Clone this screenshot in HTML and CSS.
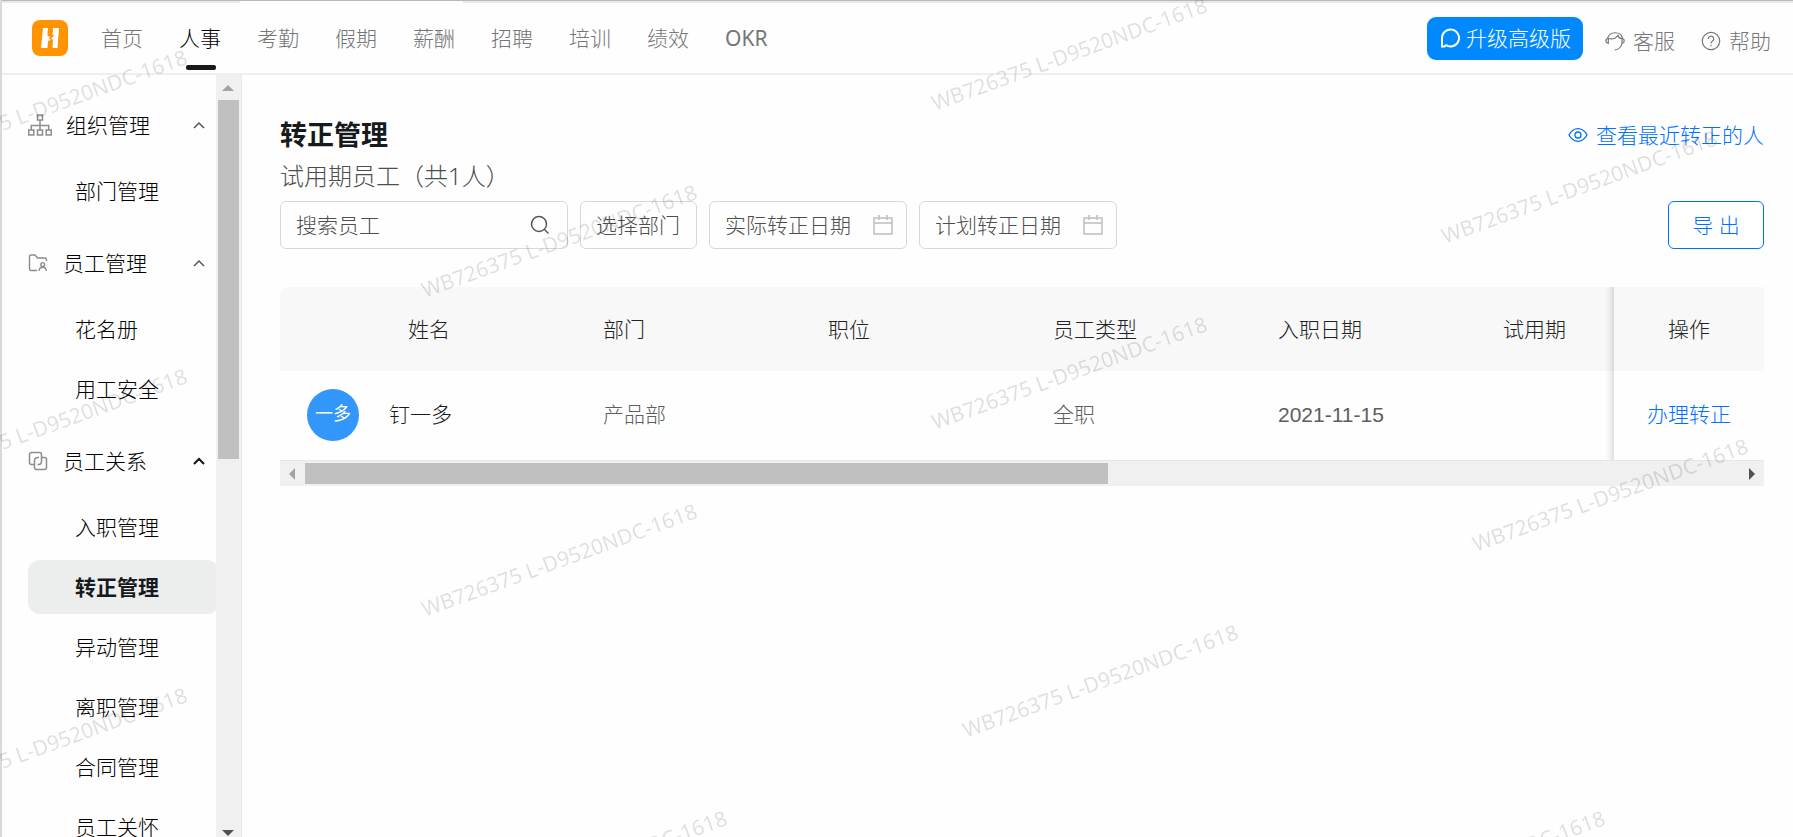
FILE: index.html
```html
<!DOCTYPE html>
<html lang="zh-CN">
<head>
    <meta charset="utf-8">
    <title>转正管理</title>
    <link rel="stylesheet" href="styles.css">
</head>
<body>

    <header class="header">
        <svg class="logo" viewBox="0 0 36 36" aria-label="人事">
            <rect width="36" height="36" rx="8" fill="#ff9400"/>
            <path d="M11 8h5l-.6 7.5 4 2.5 1-.6L21 8h6l-1.500 20h-5l.5-7-1.500-1.500-3.500 1.500-.5 7H9z" fill="#fff"/>
            <path d="M21.500 15l-3.500 3.500 3 2" fill="none" stroke="#ff9400" stroke-width="1.500"/>
        </svg>
        <nav class="nav">
            <a href="#">首页</a>
            <a href="#" class="active">人事</a>
            <a href="#">考勤</a>
            <a href="#">假期</a>
            <a href="#">薪酬</a>
            <a href="#">招聘</a>
            <a href="#">培训</a>
            <a href="#">绩效</a>
            <a href="#" class="latin">OKR</a>
        </nav>
        <div class="header-right">
            <button class="upgrade" type="button">
                <svg width="20" height="20" viewBox="0 0 20 20" fill="none" stroke="#fff" stroke-width="2">
                    <path d="M2 18.500V10a8.500 8.500 0 1 1 4 7.200L4.500 18.500z"/>
                </svg>
                升级高级版
            </button>
            <a href="#" class="help">
                <svg width="20" height="20" viewBox="0 0 20 20" fill="none" stroke="#777" stroke-width="1.200">
                    <path d="M2.500 7.500a7.900 7.900 0 0 1 15.200 0M3.300 7.500C1.500 7.500.8 9 .8 10s1 2 2.500 2.500zM17 7.500c1.500 0 2.200 1.300 2.200 2.400s-.9 2.300-2.200 2.600M3.300 7.500c4 1 8-.5 10-3.500-.3 2 1.200 3.500 3.700 3.500v5c-.7 3.500-3 6-7.500 6.500"/>
                </svg>
                客服
            </a>
            <a href="#" class="help">
                <svg width="20" height="20" viewBox="0 0 20 20" fill="none" stroke="#777" stroke-width="1.200">
                    <circle cx="10" cy="10" r="8.700"/>
                    <path d="M7.300 8a2.700 2.700 0 1 1 4 2.300c-.9.500-1.300 1-1.300 2.200M10 13.800v1.400"/>
                </svg>
                帮助
            </a>
        </div>
    </header>

    <div class="layout">
        <aside class="sidebar">
            <div class="menu">
                <button class="menu-title" type="button">
                    <svg width="24" height="22" viewBox="0 0 24 22" fill="none" stroke="#8a8c8e" stroke-width="1.500">
                        <path d="M9.500 1h5v5h-5zM.8 16h5v5h-5zM9.500 16h5v5h-5zM18.200 16h5v5h-5zM12 6v10M3.300 16v-4.500h17.400V16"/>
                    </svg>
                    <span>组织管理</span>
                    <svg class="arrow" width="12" height="8" viewBox="0 0 12 8"><path d="M1 7l5-5 5 5"/></svg>
                </button>
                <a href="#" class="menu-item">部门管理</a>

                <button class="menu-title" type="button">
                    <svg width="21" height="20" viewBox="0 0 21 20" fill="none" stroke="#8a8c8e" stroke-width="1.400">
                        <path d="M9 17.500H3a1.500 1.500 0 0 1-1.500-1.500V3.500A1.500 1.500 0 0 1 3 2h4l2.500 3H17a1.500 1.500 0 0 1 1.500 1.500V8"/>
                        <circle cx="14.700" cy="11.500" r="1.900"/>
                        <path d="M11 18c.3-2.500 1.700-3.700 3.700-3.700s3.400 1.200 3.700 3.700"/>
                    </svg>
                    <span>员工管理</span>
                    <svg class="arrow" width="12" height="8" viewBox="0 0 12 8"><path d="M1 7l5-5 5 5"/></svg>
                </button>
                <a href="#" class="menu-item">花名册</a>
                <a href="#" class="menu-item">用工安全</a>

                <button class="menu-title open" type="button">
                    <svg width="21" height="20" viewBox="0 0 21 20" fill="none" stroke="#8a8c8e" stroke-width="1.500">
                        <path d="M6.500 13.500h-3a2 2 0 0 1-2-2v-8a2 2 0 0 1 2-2h8a2 2 0 0 1 2 2v7a3 3 0 0 1-3 3H9.500"/>
                        <path d="M11 6.500H9.500a3 3 0 0 0-3 3v7a2 2 0 0 0 2 2h8a2 2 0 0 0 2-2v-8a2 2 0 0 0-2-2h-3"/>
                    </svg>
                    <span>员工关系</span>
                    <svg class="arrow" width="12" height="8" viewBox="0 0 12 8"><path d="M1 7l5-5 5 5"/></svg>
                </button>
                <a href="#" class="menu-item">入职管理</a>
                <a href="#" class="menu-item active">转正管理</a>
                <a href="#" class="menu-item">异动管理</a>
                <a href="#" class="menu-item">离职管理</a>
                <a href="#" class="menu-item">合同管理</a>
                <a href="#" class="menu-item">员工关怀</a>
            </div>
            <div class="scroll-y">
                <div class="scroll-up"></div>
                <div class="scroll-track"><div class="scroll-thumb"></div></div>
                <div class="scroll-down"></div>
            </div>
        </aside>

        <main class="main">
            <div class="title-row">
                <h1>转正管理</h1>
                <a href="#" class="recent">
                    <svg width="20" height="16" viewBox="0 0 20 16" fill="none" stroke="#0070ff" stroke-width="1.300">
                        <path d="M1 8c2.200-4 5.200-6.300 9-6.300S16.800 4 19 8c-2.200 4-5.200 6.300-9 6.300S3.200 12 1 8z"/>
                        <circle cx="10" cy="8" r="3"/>
                    </svg>
                    查看最近转正的人
                </a>
            </div>
            <p class="subtitle">试用期员工（共1人）</p>

            <div class="filters">
                <label class="field search">
                    <input type="text" placeholder="搜索员工" aria-label="搜索员工">
                    <svg width="20" height="20" viewBox="0 0 20 20" fill="none" stroke="#555" stroke-width="1.500">
                        <circle cx="9" cy="9" r="7.500"/><path d="M14.500 14.500l4 4"/>
                    </svg>
                </label>
                <button class="field dept" type="button">选择部门</button>
                <label class="field date">
                    <input type="text" placeholder="实际转正日期" aria-label="实际转正日期">
                    <svg width="20" height="20" viewBox="0 0 20 20" fill="none" stroke="#bfbfbf" stroke-width="1.500">
                        <path d="M1 3h18v16H1zM1 8h18M6 0v5M14 0v5"/>
                    </svg>
                </label>
                <label class="field date">
                    <input type="text" placeholder="计划转正日期" aria-label="计划转正日期">
                    <svg width="20" height="20" viewBox="0 0 20 20" fill="none" stroke="#bfbfbf" stroke-width="1.500">
                        <path d="M1 3h18v16H1zM1 8h18M6 0v5M14 0v5"/>
                    </svg>
                </label>
                <button class="export" type="button">导 出</button>
            </div>

            <div class="table-wrap">
                <table>
                    <colgroup>
                        <col class="col-name">
                        <col class="col"><col class="col"><col class="col"><col class="col">
                        <col>
                        <col class="col-action">
                    </colgroup>
                    <thead>
                        <tr>
                            <th class="name-head">姓名</th>
                            <th>部门</th>
                            <th>职位</th>
                            <th>员工类型</th>
                            <th>入职日期</th>
                            <th>试用期</th>
                            <th class="action">操作</th>
                        </tr>
                    </thead>
                    <tbody>
                        <tr>
                            <td>
                                <div class="person"><span class="avatar">一多</span>钉一多</div>
                            </td>
                            <td>产品部</td>
                            <td></td>
                            <td>全职</td>
                            <td>2021-11-15</td>
                            <td></td>
                            <td class="action"><a href="#">办理转正</a></td>
                        </tr>
                    </tbody>
                </table>
            </div>
            <div class="scroll-x">
                <div class="scroll-left"></div>
                <div class="scroll-track"><div class="scroll-thumb"></div></div>
                <div class="scroll-right"></div>
            </div>
        </main>
    </div>

    <!-- watermark layer -->
    <svg class="watermark" aria-hidden="true">
        <text transform="translate(-85 163) rotate(-20)">WB726375 L-D9520NDC-1618</text>
        <text transform="translate(-85 482) rotate(-20)">WB726375 L-D9520NDC-1618</text>
        <text transform="translate(-85 801) rotate(-20)">WB726375 L-D9520NDC-1618</text>
        <text transform="translate(425 298) rotate(-20)">WB726375 L-D9520NDC-1618</text>
        <text transform="translate(425 617) rotate(-20)">WB726375 L-D9520NDC-1618</text>
        <text transform="translate(455 924) rotate(-20)">WB726375 L-D9520NDC-1618</text>
        <text transform="translate(935 111) rotate(-20)">WB726375 L-D9520NDC-1618</text>
        <text transform="translate(935 430) rotate(-20)">WB726375 L-D9520NDC-1618</text>
        <text transform="translate(966 738) rotate(-20)">WB726375 L-D9520NDC-1618</text>
        <text transform="translate(1445 244) rotate(-20)">WB726375 L-D9520NDC-1618</text>
        <text transform="translate(1476 552) rotate(-20)">WB726375 L-D9520NDC-1618</text>
        <text transform="translate(1333 924) rotate(-20)">WB726375 L-D9520NDC-1618</text>
    </svg>

</body>
</html>
```

FILE: styles.css
```css
* {
    box-sizing: border-box;
}

body, html {
    height: 100%;
    margin: 0;
}

body {
    display: flex;
    flex-direction: column;
    overflow: hidden;
    border-left: 2px solid #d9d9d9;
    background: #fefefe;
    color: #171a1d;
    font-family: "Noto Sans", "Noto Sans CJK SC", sans-serif;
    font-size: 21px;
    font-weight: 300;
    line-height: 30px;
}

a {
    color: inherit;
    text-decoration: none;
}

button, input {
    font: inherit;
    color: inherit;
    cursor: pointer;
}

svg {
    flex: none;
}

/* header */
.header {
    display: flex;
    flex: none;
    height: 75px;
    padding: 0 22px 0 30px;
    border-top: 1px solid #b9b9b9;
    border-bottom: 2px solid #efefef;
    background: linear-gradient(to right, #e8e8e8 238px, #fefefe 238px, #fefefe 461px, #e8e8e8 461px) 0 0 / 100% 2px no-repeat;
}

.logo {
    width: 36px;
    height: 36px;
    margin: 19px 33px 0 0;
}

.nav {
    display: flex;
    gap: 36px;
}

.nav a {
    position: relative;
    padding-top: 22px;
    color: #747677;
}

.nav .active {
    color: #000;
}

.nav .latin {
    font-weight: 400;
}

.nav .active::after {
    content: "";
    position: absolute;
    left: 7px;
    bottom: 3px;
    width: 30px;
    height: 5px;
    border-radius: 2px;
    background: #171a1d;
}

.header-right {
    display: flex;
    align-items: flex-start;
    margin-left: auto;
}

.upgrade {
    display: flex;
    align-items: center;
    gap: 6px;
    height: 43px;
    margin: 16px 22px 0 0;
    padding: 0 12px 2px 13px;
    border: none;
    border-radius: 9px;
    background: #0089ff;
    color: #fff;
}

.help {
    display: flex;
    align-items: center;
    gap: 8px;
    padding-top: 25px;
    color: #747677;
}

.help + .help {
    margin-left: 26px;
}

/* sidebar */
.layout {
    display: flex;
    flex: 1;
    min-height: 0;
}

.sidebar {
    display: flex;
    flex: none;
    width: 240px;
    border-right: 1px solid #e8e8e8;
}

.menu {
    flex: 1;
    overflow: hidden;
    padding: 5px 0 0 26px;
}

.menu-title {
    display: flex;
    align-items: center;
    gap: 14px;
    width: 100%;
    height: 60px;
    margin: 15px 0 9px;
    padding: 0 11px 0 0;
    border: none;
    background: none;
}

.menu-title,
.menu-item {
    color: #000;
}

.arrow {
    margin-left: auto;
    fill: none;
    stroke: #555;
    stroke-width: 1.5;
}

.open .arrow {
    stroke: #111;
    stroke-width: 2;
}

.menu-item {
    display: block;
    height: 54px;
    margin: 0 -3px 6px 0;
    padding-left: 47px;
    border-radius: 12px;
    line-height: 54px;
}

.menu-item.active {
    background: #eceeed;
    color: #171a1d;
    font-weight: bold;
}

/* scrollbars */
.scroll-y {
    display: flex;
    flex-direction: column;
    width: 25px;
    padding: 0 2px;
    background: #f0f0f0;
}

.scroll-track {
    flex: 1;
}

.scroll-thumb {
    background: #c0c0c0;
}

.scroll-y .scroll-thumb {
    height: 50%;
}

.scroll-up {
    height: 25px;
    padding: 10px 4px;
}

.scroll-down {
    height: 19px;
    padding: 12px 4px 0;
}

.scroll-up::before,
.scroll-down::before {
    content: "";
    display: block;
    width: 0;
    border: 6px solid transparent;
    border-top: none;
    border-bottom-color: #a3a3a3;
}

.scroll-down::before {
    border-bottom: none;
    border-top: 6px solid #505050;
}

.scroll-x {
    display: flex;
    height: 26px;
    padding: 2px 0;
    border-top: 1px solid #e6e6e6;
    background: #f0f0f0;
}

.scroll-x .scroll-thumb {
    width: 56%;
    height: 21px;
}

.scroll-left,
.scroll-right {
    width: 25px;
    padding: 5px 9px;
}

.scroll-right {
    padding-left: 10px;
}

.scroll-left::before,
.scroll-right::before {
    content: "";
    display: block;
    width: 0;
    border: 6px solid transparent;
    border-left: none;
    border-right-color: #a3a3a3;
}

.scroll-right::before {
    border-right: none;
    border-left: 6px solid #505050;
}

/* content */
.main {
    flex: 1;
    min-width: 0;
    padding: 41px 29px 0 38px;
}

.title-row {
    display: flex;
    justify-content: space-between;
    align-items: center;
    height: 38px;
}

h1 {
    margin: 0;
    font-size: 27px;
    line-height: 38px;
}

.recent {
    display: flex;
    align-items: center;
    gap: 8px;
    color: #0070ff;
}

.subtitle {
    margin: 4px 0 7px;
    color: #4c4e50;
    font-size: 24px;
    line-height: 36px;
}

.filters {
    display: flex;
    gap: 12px;
    margin-bottom: 38px;
}

.field {
    display: flex;
    align-items: center;
    height: 48px;
    padding: 0 15px;
    border: 1px solid #d8d8d8;
    border-radius: 6px;
    background: none;
    color: #4c4e50;
}

.field input {
    flex: 1;
    min-width: 0;
    padding: 0;
    border: none;
    outline: none;
    background: none;
}

.field input::placeholder {
    color: #4c4e50;
    opacity: 1;
}

.search {
    width: 288px;
}

.search svg {
    margin-right: 2px;
}

.dept {
    width: 117px;
}

.date {
    width: 198px;
    padding-right: 13px;
}

.export {
    width: 96px;
    height: 48px;
    margin-left: auto;
    padding: 0;
    border: 1px solid #0070ff;
    border-radius: 6px;
    background: #fff;
    color: #0070ff;
}

.table-wrap {
    overflow: hidden;
    border-radius: 8px 0 0 0;
}

table {
    width: 2650px;
    table-layout: fixed;
    border-collapse: collapse;
}

.col-name {
    width: 303px;
}

.col {
    width: 225px;
}

.col-action {
    width: 150px;
}

th, td {
    padding: 0 20px;
    text-align: left;
    font-weight: 300;
}

th {
    height: 84px;
    background: #f8f8f8;
    color: #222;
}

.name-head {
    padding-left: 128px;
}

td {
    height: 89px;
    padding-bottom: 2px;
    color: #5c5e60;
    font-family: "Liberation Sans", "Noto Sans CJK SC", sans-serif;
}

.person {
    display: flex;
    align-items: center;
    gap: 30px;
    padding-left: 7px;
    color: #171a1d;
}

.avatar {
    width: 52px;
    height: 52px;
    border-radius: 50%;
    background: #3296fa;
    color: #fff;
    font-size: 18px;
    font-weight: 400;
    line-height: 50px;
    text-align: center;
}

.action {
    position: sticky;
    right: 0;
    text-align: center;
}

td.action {
    background: #fefefe;
    color: #0070ff;
}

.action::before {
    content: "";
    position: absolute;
    top: 0;
    bottom: 0;
    left: -9px;
    width: 9px;
    background: linear-gradient(to left, rgba(0, 0, 0, 0.12), rgba(0, 0, 0, 0.03) 60%, rgba(0, 0, 0, 0));
}

.watermark {
    position: fixed;
    top: 0;
    left: 0;
    width: 100%;
    height: 100%;
    pointer-events: none;
    fill: rgba(0, 0, 0, 0.12);
    font-size: 21px;
    font-weight: 400;
}
```
